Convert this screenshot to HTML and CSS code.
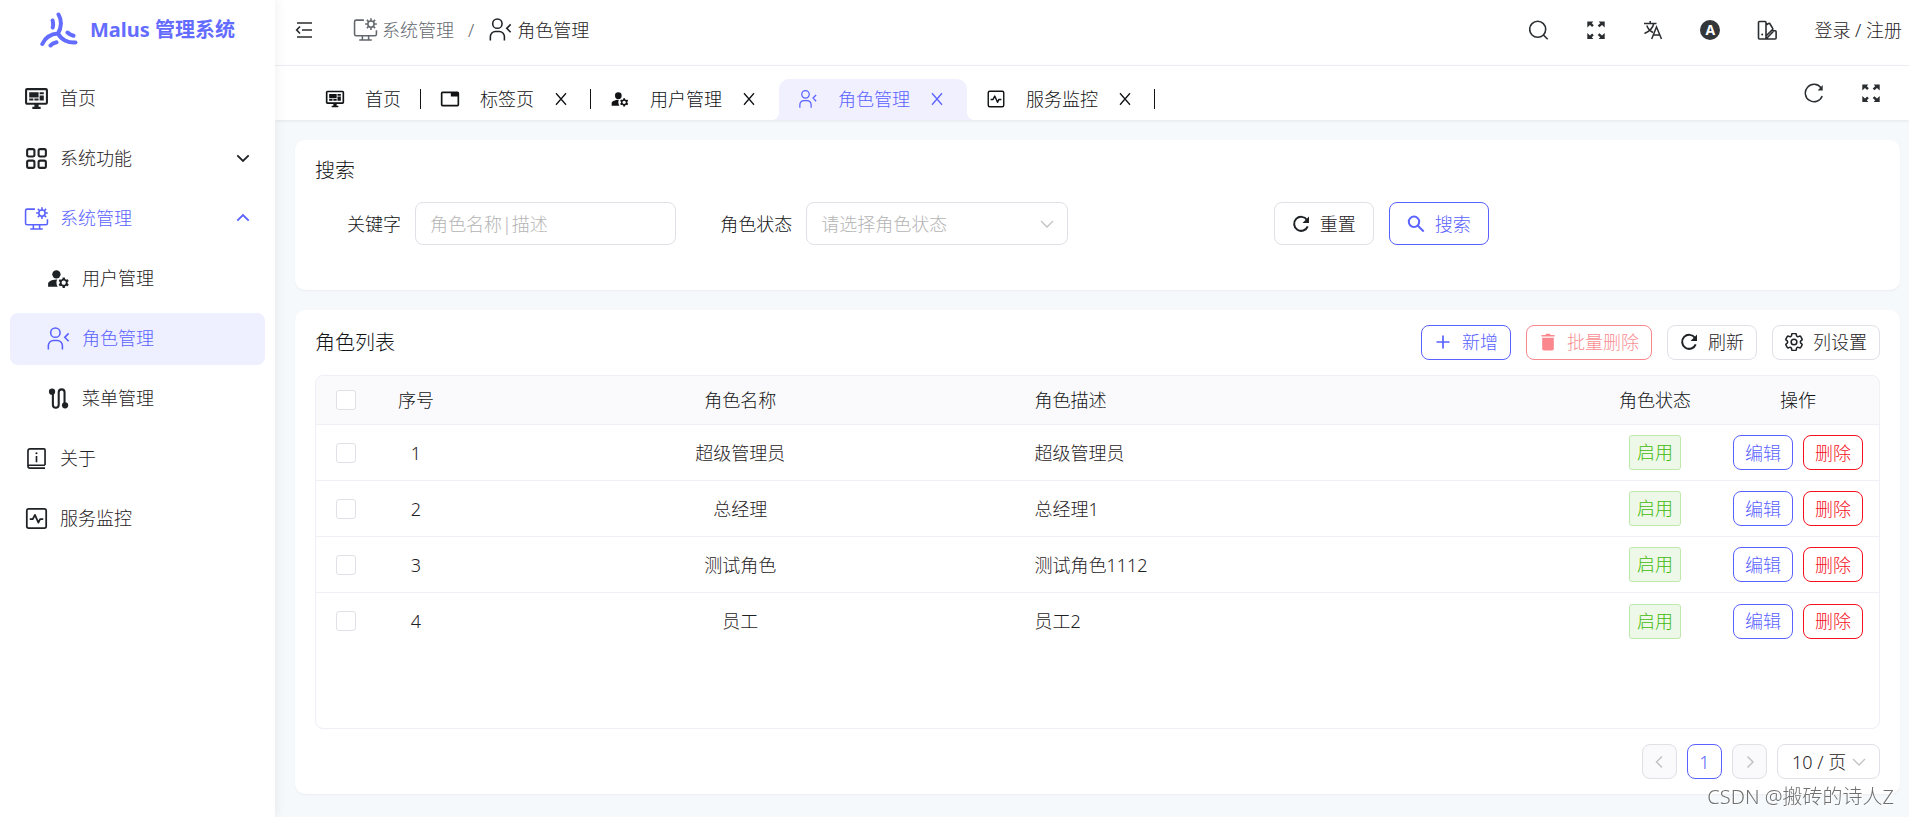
FILE: index.html
```html
<!DOCTYPE html>
<html lang="zh-CN">
<head>
<meta charset="utf-8">
<meta name="viewport" content="width=device-width, initial-scale=1">
<title>Malus 管理系统</title>
<link rel="stylesheet" href="styles.css">
</head>
<body>
<svg class="sprite" aria-hidden="true">
  <symbol id="i-home" viewBox="0 0 24 24"><path fill="currentColor" d="M21,16V4H3V16H21M21,2A2,2 0 0,1 23,4V16A2,2 0 0,1 21,18H14V20H16V22H8V20H10V18H3C1.89,18 1,17.1 1,16V4C1,2.89 1.89,2 3,2H21M5,6H14V11H5V6M15,6H19V8H15V6M19,9V14H15V9H19M5,12H9V14H5V12M10,12H14V14H10V12Z"/></symbol>
  <symbol id="i-grid" viewBox="0 0 24 24"><g fill="none" stroke="currentColor" stroke-width="2"><rect x="3" y="3" width="7" height="7" rx="1.5"/><rect x="14" y="3" width="7" height="7" rx="1.5"/><rect x="3" y="14" width="7" height="7" rx="1.5"/><rect x="14" y="14" width="7" height="7" rx="1.5"/></g></symbol>
  <symbol id="i-system" viewBox="0 0 32 32"><g fill="none" stroke="currentColor" stroke-width="2"><path d="M14 4H4a2 2 0 0 0-2 2v16a2 2 0 0 0 2 2h24a2 2 0 0 0 2-2v-5M12 24v5M20 24v5M8 29.5h16"/><circle cx="23" cy="9" r="4"/><path d="M23 5V1.500M23 13v3.500M19 9h-3.500M27 9h3.500M20.200 6.200l-2.500-2.500M25.800 6.200l2.500-2.500M20.200 11.800l-2.500 2.500M25.800 11.800l2.500 2.500"/></g></symbol>
  <symbol id="i-user-cog" viewBox="0 0 24 24"><g fill="currentColor"><circle cx="10" cy="8" r="4"/><path d="M10.670 13.020C10.450 13.010 10.230 13 10 13c-2.420 0-4.680.670-6.610 1.820-.880.520-1.390 1.500-1.390 2.530V20h9.260A6.963 6.963 0 0 1 10 16c0-1.070.250-2.090.670-2.980zM20.750 16c0-.220-.030-.420-.060-.630l1.140-1.010-1-1.730-1.450.490c-.320-.270-.680-.480-1.080-.630L18 11h-2l-.300 1.490c-.400.150-.760.360-1.080.630l-1.450-.490-1 1.730 1.140 1.010c-.030.210-.060.410-.060.630s.030.420.060.630l-1.140 1.010 1 1.730 1.450-.490c.320.270.680.480 1.080.630L16 21h2l.300-1.490c.400-.150.760-.360 1.080-.630l1.450.490 1-1.730-1.140-1.010c.030-.210.060-.410.060-.630zM17 18c-1.100 0-2-.900-2-2s.900-2 2-2 2 .900 2 2-.900 2-2 2z"/></g></symbol>
  <symbol id="i-role" viewBox="0 0 32 32"><g fill="none" stroke="currentColor" stroke-width="2"><circle cx="12" cy="8.500" r="6"/><path d="M3 30v-5a6.500 6.500 0 0 1 6.500-6.500h5A6.500 6.500 0 0 1 21 25v5M29 9.500L24 14.500l5 5"/></g></symbol>
  <symbol id="i-route" viewBox="0 0 24 24"><circle cx="5.800" cy="5.500" r="3" fill="currentColor"/><circle cx="18.300" cy="18.500" r="3" fill="currentColor"/><path fill="none" stroke="currentColor" stroke-width="2" d="M6.600 6v12a2.800 2.800 0 0 0 5.600 0V6a2.800 2.800 0 0 1 5.600 0v12"/></symbol>
  <symbol id="i-about" viewBox="0 0 24 24"><g fill="none" stroke="currentColor" stroke-width="1.600"><path d="M20.200 18.200V3.800a1 1 0 0 0-1-1H5.800A2 2 0 0 0 3.800 4.800v14.400a2 2 0 0 0 2 2h14.400M4 18.500h16.200M12 9.500v6"/></g><circle cx="12" cy="7" r="1" fill="currentColor"/></symbol>
  <symbol id="i-monitor" viewBox="0 0 24 24"><g fill="none" stroke="currentColor" stroke-width="1.700" stroke-linejoin="round"><rect x="2.700" y="2.700" width="18.600" height="18.600" rx="1.800"/><path d="M5.500 12.500h3l2-4 3.300 7.500 1.700-3.500h3"/></g></symbol>
  <symbol id="i-tab" viewBox="0 0 24 24"><path fill="currentColor" d="M21 3H3a2 2 0 0 0-2 2v14a2 2 0 0 0 2 2h18a2 2 0 0 0 2-2V5a2 2 0 0 0-2-2m0 16H3V5h10v4h8z"/></symbol>
  <symbol id="i-close" viewBox="0 0 14 14"><path fill="none" stroke="currentColor" stroke-width="1.300" d="M2 1.300l10 11.400M12 1.300L2 12.700"/></symbol>
  <symbol id="i-down" viewBox="0 0 14 14"><path fill="none" stroke="currentColor" stroke-width="1.800" d="M1.300 4.300L7 10l5.700-5.700"/></symbol>
  <symbol id="i-up" viewBox="0 0 14 14"><path fill="none" stroke="currentColor" stroke-width="1.800" d="M1.300 9.700L7 4l5.700 5.700"/></symbol>
  <symbol id="i-thin-down" viewBox="0 0 14 14"><path fill="none" stroke="currentColor" stroke-width="1.300" d="M1 4l6 6 6-6"/></symbol>
  <symbol id="i-left" viewBox="0 0 14 14"><path fill="none" stroke="currentColor" stroke-width="1.500" d="M9 1.500L3.500 7 9 12.500"/></symbol>
  <symbol id="i-right" viewBox="0 0 14 14"><path fill="none" stroke="currentColor" stroke-width="1.500" d="M4.500 1.500L10 7l-5.500 5.500"/></symbol>
  <symbol id="i-fold" viewBox="0 0 20 20"><path fill="none" stroke="currentColor" stroke-width="1.700" d="M3 3h15M8 10h10M3 17h15M6 6.500L2.700 10 6 13.500"/></symbol>
  <symbol id="i-search" viewBox="0 0 20 20"><g fill="none" stroke="currentColor" stroke-width="1.600"><circle cx="8.700" cy="9.300" r="8"/><path d="M14.400 15l4.300 4.300"/></g></symbol>
  <symbol id="i-search-bold" viewBox="0 0 18 18"><g fill="none" stroke="currentColor" stroke-width="2"><circle cx="7" cy="6.800" r="5.200"/><path d="M10.700 10.500l6 6"/></g></symbol>
  <symbol id="i-full" viewBox="0 0 20 20"><path fill="currentColor" d="M1.300 1.500h6L5.800 3.200l2 2-1.700 1.700-2.100-2-2.700 2.500zM18.700 1.500h-6l1.500 1.700-2.500 2.300 1.700 1.700 2.600-2.300 2.700 2.500zM1.300 18.900h6l-1.500-1.700 2-2-1.700-1.700-2.100 2-2.700-2.500zM18.700 18.900h-6l1.500-1.700-2.500-2.300 1.700-1.700 2.600 2.300 2.700-2.500z"/></symbol>
  <symbol id="i-lang" viewBox="0 0 20 20"><path fill="none" stroke="currentColor" stroke-width="1.500" d="M1 3.500h12.500M7.200 1v2.500M10.800 3.500C10 7.500 6 11.500 1.500 13.500M3.800 5.500c1 3 3.500 5.500 6.200 7M8.700 19L13.500 7l5 12M10.500 15h6.500"/></symbol>
  <symbol id="i-theme" viewBox="0 0 20 20"><g fill="none" stroke="currentColor" stroke-width="1.600" stroke-linejoin="round"><path d="M2.500 1.500h5.500a1 1 0 0 1 1 1v16.500H2.500a1 1 0 0 1-1-1V2.500a1 1 0 0 1 1-1zM9 5l2.500-1.500a1 1 0 0 1 1.400.3l2.800 4.600a1 1 0 0 1-.2 1.200L9 16M15.500 10.500l2.700.3a1 1 0 0 1 .9 1V18a1 1 0 0 1-1 1H9l8-8.300"/></g><circle cx="5.200" cy="14.500" r="1" fill="currentColor"/></symbol>
  <symbol id="i-reload" viewBox="0 0 20 20"><path fill="none" stroke="currentColor" stroke-width="1.500" d="M18.200 13A8.700 8.700 0 1 1 17 4.800"/><path fill="currentColor" d="M18.700 2v5.500h-5z"/></symbol>
  <symbol id="i-refresh" viewBox="0 0 18 18"><path fill="none" stroke="currentColor" stroke-width="2" d="M15.700 11.300A7 7 0 1 1 15 5"/><path fill="currentColor" d="M17 1.500V8h-6.500z"/></symbol>
  <symbol id="i-plus" viewBox="0 0 18 18"><path fill="none" stroke="currentColor" stroke-width="1.700" d="M9 2.500v13M2.500 9h13"/></symbol>
  <symbol id="i-trash" viewBox="0 0 18 18"><path fill="currentColor" d="M2.500 2h3.700l1-1.200h3.600l1 1.200h3.700v1.500h-13zM3.200 4.700h11.600v11a1.700 1.700 0 0 1-1.700 1.700H4.900a1.700 1.700 0 0 1-1.700-1.700z"/></symbol>
  <symbol id="i-cog" viewBox="2.500 2.500 19 19"><g fill="none" stroke="currentColor" stroke-width="1.600"><path d="M9.594 3.940c.090-.542.560-.940 1.110-.940h2.593c.550 0 1.020.398 1.110.940l.213 1.281c.063.374.313.686.645.870.074.040.147.083.220.127.324.196.720.257 1.075.124l1.217-.456a1.125 1.125 0 0 1 1.370.490l1.296 2.247a1.125 1.125 0 0 1-.260 1.431l-1.003.827c-.293.240-.438.613-.431.992a6.759 6.759 0 0 1 0 .255c-.007.378.138.750.430.990l1.005.828c.424.350.534.954.260 1.430l-1.298 2.247a1.125 1.125 0 0 1-1.369.491l-1.217-.456c-.355-.133-.750-.072-1.076.124a6.570 6.570 0 0 1-.220.128c-.331.183-.581.495-.644.869l-.213 1.280c-.090.543-.560.941-1.110.941h-2.594c-.550 0-1.020-.398-1.110-.940l-.213-1.281c-.062-.374-.312-.686-.644-.870a6.520 6.520 0 0 1-.220-.127c-.325-.196-.720-.257-1.076-.124l-1.217.456a1.125 1.125 0 0 1-1.369-.490l-1.297-2.247a1.125 1.125 0 0 1 .260-1.431l1.004-.827c.292-.240.437-.613.430-.992a6.932 6.932 0 0 1 0-.255c.007-.378-.138-.750-.430-.990l-1.004-.828a1.125 1.125 0 0 1-.260-1.430l1.297-2.247a1.125 1.125 0 0 1 1.370-.491l1.216.456c.356.133.751.072 1.076-.124.072-.044.146-.087.220-.128.332-.183.582-.495.644-.869z"/><circle cx="12" cy="12" r="3"/></g></symbol>
  <symbol id="i-logo" viewBox="0 0 38 36"><g fill="none" stroke="currentColor" stroke-width="4" stroke-linecap="round"><path d="M18.500 2.500C22 8 21.500 16 18 21.500M18 21.500C11 22 5 26 2.300 32M18 21.500C21 27.500 28 31 35.500 30.500"/><path d="M12.600 8.500Q13.600 12 12.700 15.500M27.500 20.500Q30 23 33.500 23.800M10.500 33.500Q12.500 31 16.500 30.200"/></g></symbol>
</svg>

<div class="app">
  <aside class="sidebar">
    <div class="brand"><svg class="logo"><use href="#i-logo"/></svg><h1>Malus 管理系统</h1></div>
    <nav class="menu">
      <a class="item" href="#"><svg class="ico-lg"><use href="#i-home"/></svg><span>首页</span></a>
      <a class="item" href="#"><svg class="ico-lg"><use href="#i-grid"/></svg><span>系统功能</span><svg class="ico-sm caret"><use href="#i-down"/></svg></a>
      <a class="item open" href="#"><svg class="ico-lg"><use href="#i-system"/></svg><span>系统管理</span><svg class="ico-sm caret"><use href="#i-up"/></svg></a>
      <a class="item sub" href="#"><svg class="ico-lg"><use href="#i-user-cog"/></svg><span>用户管理</span></a>
      <a class="item sub active" href="#"><svg class="ico-lg"><use href="#i-role"/></svg><span>角色管理</span></a>
      <a class="item sub" href="#"><svg class="ico-lg"><use href="#i-route"/></svg><span>菜单管理</span></a>
      <a class="item" href="#"><svg class="ico-lg"><use href="#i-about"/></svg><span>关于</span></a>
      <a class="item" href="#"><svg class="ico-lg"><use href="#i-monitor"/></svg><span>服务监控</span></a>
    </nav>
  </aside>

  <div class="main">
    <header class="header">
      <button class="icon-btn" aria-label="折叠菜单"><svg class="ico"><use href="#i-fold"/></svg></button>
      <nav class="crumbs">
        <a class="crumb" href="#"><svg class="ico-lg"><use href="#i-system"/></svg>系统管理</a>
        <span class="slash">/</span>
        <a class="crumb current" href="#"><svg class="ico-lg"><use href="#i-role"/></svg>角色管理</a>
      </nav>
      <div class="tools">
        <button class="icon-btn" aria-label="搜索"><svg class="ico"><use href="#i-search"/></svg></button>
        <button class="icon-btn" aria-label="全屏"><svg class="ico"><use href="#i-full"/></svg></button>
        <button class="icon-btn" aria-label="语言"><svg class="ico"><use href="#i-lang"/></svg></button>
        <button class="icon-btn badge-a">A</button>
        <button class="icon-btn" aria-label="主题"><svg class="ico"><use href="#i-theme"/></svg></button>
        <a class="login" href="#">登录 / 注册</a>
      </div>
    </header>

    <div class="tabbar">
      <div class="tabs">
        <div class="tab divided"><svg class="ico"><use href="#i-home"/></svg><span>首页</span></div>
        <div class="tab closable divided"><svg class="ico"><use href="#i-tab"/></svg><span>标签页</span><button class="close" aria-label="关闭"><svg class="ico-sm"><use href="#i-close"/></svg></button></div>
        <div class="tab closable"><svg class="ico"><use href="#i-user-cog"/></svg><span>用户管理</span><button class="close" aria-label="关闭"><svg class="ico-sm"><use href="#i-close"/></svg></button></div>
        <div class="tab closable active"><svg class="ico"><use href="#i-role"/></svg><span>角色管理</span><button class="close" aria-label="关闭"><svg class="ico-sm"><use href="#i-close"/></svg></button></div>
        <div class="tab closable divided"><svg class="ico"><use href="#i-monitor"/></svg><span>服务监控</span><button class="close" aria-label="关闭"><svg class="ico-sm"><use href="#i-close"/></svg></button></div>
      </div>
      <div class="tab-tools">
        <button class="icon-btn" aria-label="重新加载"><svg class="ico"><use href="#i-reload"/></svg></button>
        <button class="icon-btn" aria-label="内容全屏"><svg class="ico"><use href="#i-full"/></svg></button>
      </div>
    </div>

    <main class="content">
      <section class="card search-card">
        <h2>搜索</h2>
        <form class="form">
          <div class="field"><label for="kw">关键字</label><input id="kw" class="control" type="text" placeholder="角色名称|描述"></div>
          <div class="field"><label for="st">角色状态</label><div class="select-box"><select id="st" class="control empty"><option>请选择角色状态</option></select><svg class="ico-sm arrow"><use href="#i-thin-down"/></svg></div></div>
          <div class="actions">
            <button type="button" class="btn btn-lg"><svg class="ico-md"><use href="#i-refresh"/></svg>重置</button>
            <button type="button" class="btn btn-lg primary"><svg class="ico-md"><use href="#i-search-bold"/></svg>搜索</button>
          </div>
        </form>
      </section>

      <section class="card list-card">
        <div class="list-head">
          <h2>角色列表</h2>
          <div class="list-tools">
            <button class="btn primary"><svg class="ico-md"><use href="#i-plus"/></svg>新增</button>
            <button class="btn danger" disabled><svg class="ico-md"><use href="#i-trash"/></svg>批量删除</button>
            <button class="btn"><svg class="ico-md"><use href="#i-refresh"/></svg>刷新</button>
            <button class="btn"><svg class="ico-md"><use href="#i-cog"/></svg>列设置</button>
          </div>
        </div>
        <div class="table-wrap">
          <table class="table">
            <colgroup><col class="c-check"><col class="c-no"><col><col><col class="c-state"><col class="c-ops"></colgroup>
            <thead>
              <tr><th><input class="check" type="checkbox" aria-label="全选"></th><th>序号</th><th>角色名称</th><th class="left">角色描述</th><th>角色状态</th><th>操作</th></tr>
            </thead>
            <tbody>
              <tr><td><input class="check" type="checkbox" aria-label="选择 1"></td><td>1</td><td>超级管理员</td><td class="left">超级管理员</td><td><span class="tag">启用</span></td><td><div class="ops"><button class="btn op primary">编辑</button><button class="btn op danger">删除</button></div></td></tr>
              <tr><td><input class="check" type="checkbox" aria-label="选择 2"></td><td>2</td><td>总经理</td><td class="left">总经理1</td><td><span class="tag">启用</span></td><td><div class="ops"><button class="btn op primary">编辑</button><button class="btn op danger">删除</button></div></td></tr>
              <tr><td><input class="check" type="checkbox" aria-label="选择 3"></td><td>3</td><td>测试角色</td><td class="left">测试角色1112</td><td><span class="tag">启用</span></td><td><div class="ops"><button class="btn op primary">编辑</button><button class="btn op danger">删除</button></div></td></tr>
              <tr><td><input class="check" type="checkbox" aria-label="选择 4"></td><td>4</td><td>员工</td><td class="left">员工2</td><td><span class="tag">启用</span></td><td><div class="ops"><button class="btn op primary">编辑</button><button class="btn op danger">删除</button></div></td></tr>
            </tbody>
          </table>
        </div>
        <div class="pager">
          <button class="page" disabled aria-label="上一页"><svg class="ico-sm"><use href="#i-left"/></svg></button>
          <button class="page current">1</button>
          <button class="page" disabled aria-label="下一页"><svg class="ico-sm"><use href="#i-right"/></svg></button>
          <div class="select-box"><select class="control size" aria-label="每页条数"><option>10 / 页</option></select><svg class="ico-sm arrow"><use href="#i-thin-down"/></svg></div>
        </div>
      </section>
    </main>
  </div>
</div>
<div class="watermark">CSDN @搬砖的诗人Z</div>
</body>
</html>
```

FILE: styles.css
```css
:root {
  --primary: #5a62ff;
  --text: #1f2225;
  --title: #111315;
  --icon: #2b2e31;
  --line: #e0e0e6;
  --soft-line: #efeff5;
  --danger: #f5121d;
  --hint: #b4b4b4;
}

* { box-sizing: border-box; }

body {
  margin: 0;
  background: #f5f9fc;
  color: var(--text);
  font: 300 18px/28px "Noto Sans", "Noto Sans CJK SC", sans-serif;
}

a { color: inherit; text-decoration: none; }
button, input, select { font: inherit; color: inherit; }
button { padding: 0; border: 0; background: none; cursor: pointer; }
h1, h2 { margin: 0; }
h2 { font-size: 20px; font-weight: 300; color: var(--title); }
svg { display: block; flex: none; }

.sprite { position: absolute; width: 0; height: 0; }
.ico-sm { width: 14px; height: 14px; }
.ico-md { width: 18px; height: 18px; }
.ico { width: 20px; height: 20px; }
.ico-lg { width: 25px; height: 25px; }

.app { display: flex; min-height: 100vh; }

/* Sidebar */
.sidebar {
  position: relative;
  z-index: 1;
  flex: 0 0 275px;
  background: #fff;
  box-shadow: 2px 0 10px rgba(29, 35, 41, 0.06);
}
.brand {
  display: flex;
  align-items: center;
  justify-content: center;
  gap: 12px;
  height: 60px;
  color: #646cff;
}
.brand h1 { font-size: 20px; font-weight: 700; }
.logo { width: 38px; height: 36px; }
.menu { display: flex; flex-direction: column; gap: 8px; padding: 13px 10px 0; }
.item {
  display: flex;
  align-items: center;
  gap: 11px;
  height: 52px;
  padding: 0 15px 2px 14px;
  border-radius: 8px;
}
.item .ico-lg { color: var(--text); }
.item.sub { padding-left: 36px; }
.caret { margin-left: auto; }
.item.open, .item.active,
.item.open .ico-lg, .item.active .ico-lg { color: var(--primary); }
.item.active { background: #eeefff; }

/* Header */
.main { flex: 1; min-width: 0; display: flex; flex-direction: column; }
.header {
  display: flex;
  align-items: center;
  height: 66px;
  padding: 0 7px 6px 19px;
  background: #fff;
  border-bottom: 1px solid var(--soft-line);
}
.icon-btn { display: flex; align-items: center; justify-content: center; width: 20px; height: 20px; color: var(--icon); }
.crumbs { display: flex; align-items: center; gap: 14px; margin-left: 39px; }
.crumb { display: flex; align-items: center; gap: 4px; color: #63686e; }
.crumb.current { color: var(--text); }
.slash { color: #63686e; }
.tools { display: flex; align-items: center; gap: 37px; margin-left: auto; }
.badge-a {
  border-radius: 50%;
  background: #333639;
  color: #fff;
  font-size: 14px;
  font-weight: 700;
  line-height: 20px;
}

/* Tabs */
.tabbar {
  display: flex;
  align-items: flex-end;
  height: 54px;
  padding: 0 28px 0 31px;
  background: #fff;
  box-shadow: 0 1px 3px rgba(0, 21, 41, 0.08);
}
.tabs { display: flex; }
.tab {
  position: relative;
  display: flex;
  align-items: center;
  gap: 20px;
  height: 41px;
  padding: 0 20px 2px 19px;
  color: var(--title);
}
.tab.closable { padding-right: 23px; }
.tab.divided::after {
  content: "";
  position: absolute;
  right: 0;
  top: 10px;
  width: 1px;
  height: 20px;
  background: var(--title);
}
.tab.active { border-radius: 10px 10px 0 0; background: #f0f0ff; color: var(--primary); }
.tab.active::before, .tab.active::after {
  content: "";
  position: absolute;
  bottom: 0;
  width: 8px;
  height: 8px;
}
.tab.active::before { left: -8px; background: radial-gradient(circle at 0 0, transparent 8px, #f0f0ff 8px); }
.tab.active::after { right: -8px; background: radial-gradient(circle at 100% 0, transparent 8px, #f0f0ff 8px); }
.tab-tools { display: flex; align-self: center; gap: 37px; margin-left: auto; }

/* Cards */
.content { flex: 1; display: flex; flex-direction: column; gap: 20px; padding: 20px 9px 23px 20px; }
.card { padding: 15px 20px; border-radius: 10px; background: #fff; box-shadow: 0 1px 2px rgba(0, 21, 41, 0.05); }
.search-card { min-height: 150px; }
.search-card h2 { line-height: 32px; }
.form { display: grid; grid-template-columns: repeat(4, 1fr); margin-top: 15px; }
.field { display: grid; grid-template-columns: 100px 1fr; align-items: center; padding-right: 30px; }
.field label { padding-right: 14px; text-align: right; color: var(--title); }
.control {
  width: 100%;
  height: 43px;
  padding: 0 14px;
  border: 1px solid var(--line);
  border-radius: 8px;
  background: #fff;
  appearance: none;
}
.control::placeholder { color: var(--hint); opacity: 1; }
.control.empty { color: var(--hint); }
.select-box { position: relative; }
.arrow { position: absolute; right: 14px; top: calc(50% - 7px); color: #c2c2c2; pointer-events: none; }
.actions { display: flex; justify-content: flex-end; gap: 15px; }

.btn {
  display: inline-flex;
  align-items: center;
  justify-content: center;
  gap: 10px;
  height: 35px;
  padding: 0 12px 2px;
  border: 1px solid var(--line);
  border-radius: 8px;
  background: #fff;
}
.btn-lg { height: 43px; padding: 0 17px; }
.btn.primary { border-color: var(--primary); color: var(--primary); }
.btn.danger { border-color: var(--danger); color: var(--danger); }
.btn:disabled { opacity: 0.5; }

/* List */
.list-card { flex: 1; display: flex; flex-direction: column; }
.list-head { display: flex; align-items: center; justify-content: space-between; }
.list-tools { display: flex; gap: 15px; }
.table-wrap { flex: 1; margin: 15px 0; border: 1px solid var(--soft-line); border-radius: 8px; overflow: hidden; }
.table { width: 100%; table-layout: fixed; border-collapse: separate; border-spacing: 0; }
.c-check { width: 60px; }
.c-no { width: 80px; }
.c-state { width: 124px; }
.c-ops { width: 162px; }
.table th, .table td { height: 56px; padding: 0 10px; border-bottom: 1px solid var(--soft-line); text-align: center; font-weight: 300; }
.table th { height: 49px; background: #fafafc; color: var(--title); }
.table tr:last-child td { border-bottom: 0; }
.table .left { text-align: left; }
.check {
  display: block;
  width: 20px;
  height: 20px;
  margin: 0 auto;
  border: 1px solid var(--line);
  border-radius: 3px;
  background: #fff;
  appearance: none;
}
.tag {
  display: inline-block;
  height: 35px;
  padding: 0 7px;
  border: 1px solid #bfe8ac;
  border-radius: 3px;
  background: #edf8e8;
  color: #42b80a;
  line-height: 33px;
  vertical-align: middle;
}
.ops { display: flex; justify-content: center; gap: 10px; }
.op { width: 60px; padding: 0; }

.pager { display: flex; justify-content: flex-end; gap: 10px; }
.page {
  display: flex;
  align-items: center;
  justify-content: center;
  width: 35px;
  height: 35px;
  border: 1px solid var(--line);
  border-radius: 8px;
}
.page:disabled { background: #fafafc; color: #c2c2c2; }
.page.current { border-color: var(--primary); color: var(--primary); }
.control.size { width: 103px; height: 35px; }

.watermark {
  position: fixed;
  right: 15px;
  bottom: 6px;
  color: #707070;
  font-size: 20px;
  text-shadow: 1px 1px 1px #fff;
  pointer-events: none;
}
```
